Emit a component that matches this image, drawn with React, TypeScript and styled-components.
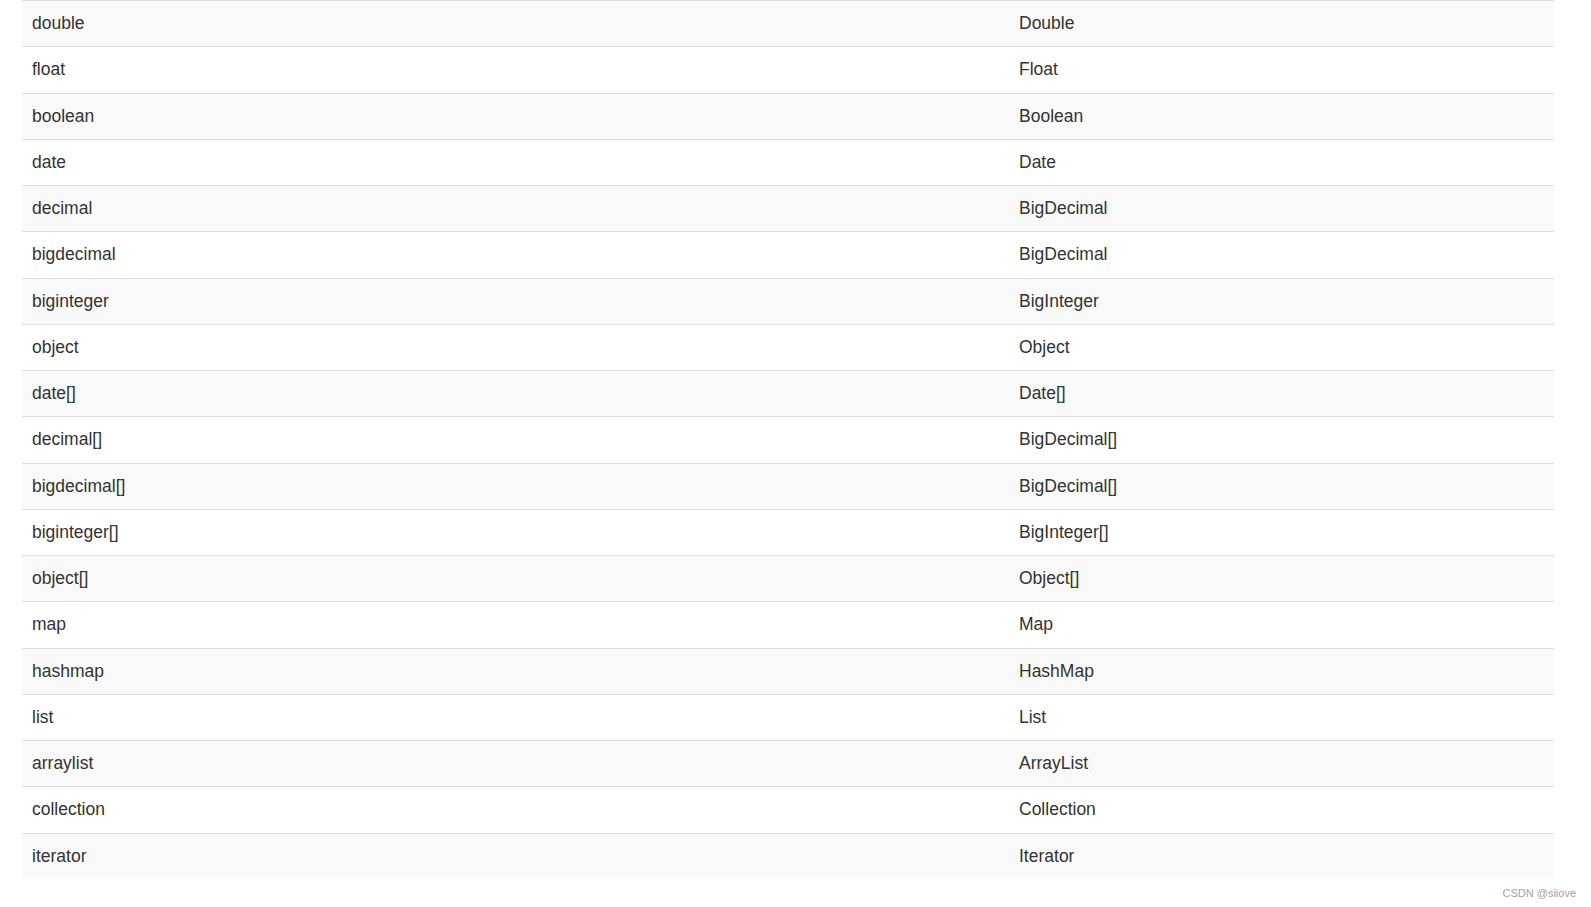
import styled, { createGlobalStyle } from 'styled-components';

const GlobalStyle = createGlobalStyle`
  html, body {
    margin: 0;
    padding: 0;
    background: #ffffff;
  }
  body {
    font-family: "Liberation Sans", Arial, sans-serif;
    color: #333333;
  }
`;

const Page = styled.div`
  width: 1591px;
  min-height: 907px;
  box-sizing: border-box;
  padding-left: 22px;
`;

const Table = styled.table`
  width: 1532px;
  border-collapse: collapse;
  border-spacing: 0;
  table-layout: fixed;
  font-size: 17.5px;
`;

const Row = styled.tr<{ $striped: boolean }>`
  background: ${({ $striped }) => ($striped ? '#f9f9f9' : '#ffffff')};
`;

const Cell = styled.td`
  padding: 10px;
  line-height: 25.25px;
  border-top: 1px solid #dddddd;
  vertical-align: top;
  color: #333333;
  white-space: nowrap;
`;

const Watermark = styled.div`
  margin-top: 8px;
  padding-right: 15px;
  text-align: right;
  font-size: 11px;
  line-height: 13px;
  color: #a3a3a3;
`;

const typeRows = [
  ['double', 'Double'],
  ['float', 'Float'],
  ['boolean', 'Boolean'],
  ['date', 'Date'],
  ['decimal', 'BigDecimal'],
  ['bigdecimal', 'BigDecimal'],
  ['biginteger', 'BigInteger'],
  ['object', 'Object'],
  ['date[]', 'Date[]'],
  ['decimal[]', 'BigDecimal[]'],
  ['bigdecimal[]', 'BigDecimal[]'],
  ['biginteger[]', 'BigInteger[]'],
  ['object[]', 'Object[]'],
  ['map', 'Map'],
  ['hashmap', 'HashMap'],
  ['list', 'List'],
  ['arraylist', 'ArrayList'],
  ['collection', 'Collection'],
  ['iterator', 'Iterator'],
];

export default function App() {
  return (
    <Page>
      <GlobalStyle />
      <Table>
        <colgroup>
          <col style={{ width: 987 }} />
          <col />
        </colgroup>
        <tbody>
          {typeRows.map(([alias, javaType], index) => (
            <Row key={alias} $striped={index % 2 === 0}>
              <Cell>{alias}</Cell>
              <Cell>{javaType}</Cell>
            </Row>
          ))}
        </tbody>
      </Table>
      <Watermark>CSDN @siiove</Watermark>
    </Page>
  );
}
